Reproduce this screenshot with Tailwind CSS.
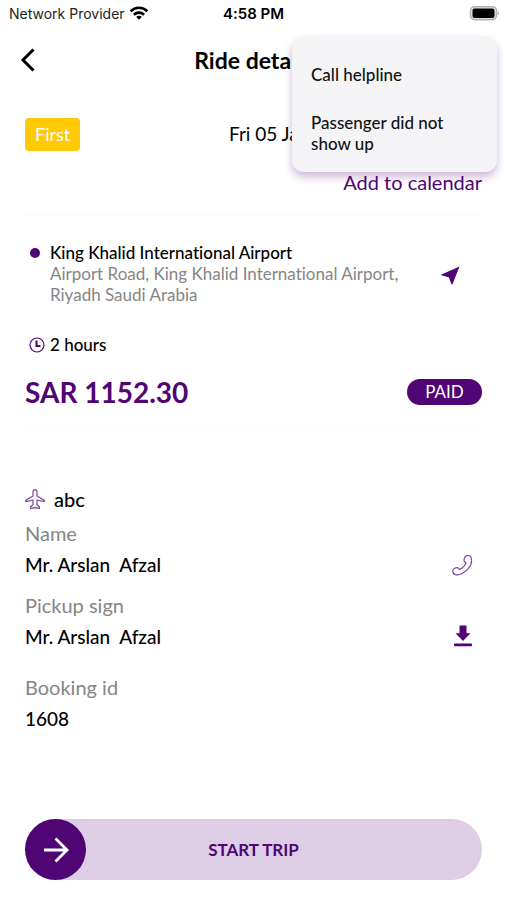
<!DOCTYPE html>
<html lang="en">
<head>
<meta charset="utf-8">
<meta name="viewport" content="width=device-width, initial-scale=1">
<title>Ride details</title>
<script src="https://cdn.jsdelivr.net/npm/@tailwindcss/browser@4"></script>
</head>
<body class="bg-white">
<div class="relative flex min-h-screen flex-col bg-white pb-5 font-['Lato','Open_Sans',sans-serif] text-black [font-variant-ligatures:none]">
  <div class="grid h-7 grid-cols-3 items-center px-2 font-['Inter',sans-serif] text-sm leading-7">
    <div class="flex items-center gap-1 pl-px whitespace-nowrap text-[#222]">
      <span>Network Provider</span>
      <svg class="h-4 w-5" viewBox="0 0 20 16" fill="none" stroke="#000" stroke-width="2.6" aria-hidden="true"><path d="M1.6 5.2a12 12 0 0 1 16.8 0M4.900 8.700a7.3 7.3 0 0 1 10.2 0"/><path d="M10 9.800c1.1 0 2.1.4 2.8 1.1L10 13.800l-2.8-2.9c.7-.7 1.7-1.1 2.8-1.1z" fill="#000" stroke="none"/></svg>
    </div>
    <span class="text-center text-[15px] font-semibold">4:58 PM</span>
    <svg class="h-4 w-8 justify-self-end" viewBox="0 0 32 16" aria-hidden="true"><rect x="3.500" y=".8" width="26" height="12.800" rx="4" fill="#e8e8e8" stroke="#b0b0b0" stroke-width="1.6"/><rect x="5.500" y="2.500" width="22" height="9.400" rx="2" fill="#000"/><path d="M30.800 5.200c1.600.6 1.600 3.400 0 4z" fill="#b0b0b0"/></svg>
  </div>

  <header class="grid h-16 grid-cols-[1fr_auto_1fr] items-center px-5">
    <button type="button" aria-label="Back" class="flex h-8 w-6 items-center"><svg class="h-6 w-4" viewBox="0 0 16 24" fill="none" stroke="#000" stroke-width="3"><path d="M13.500 1.500 3 12l10.500 10.500"/></svg></button>
    <h1 class="text-[23px] leading-8 font-bold">Ride details</h1>
  </header>

  <main class="flex grow flex-col px-[25px]">
    <div class="mt-6 flex h-9 items-center">
      <span class="flex h-[33px] items-center rounded-[4px] bg-[#ffca05] px-[10px] text-lg text-white">First</span>
      <span class="ml-auto w-[253px] text-[19px] whitespace-nowrap">Fri 05 Jan</span>
    </div>
    <a href="#" class="mt-4 self-end text-xl leading-7 text-[#4f0574]">Add to calendar</a>

    <hr class="mt-[18px] border-[#f9f9f9]">

    <section class="mt-[27px] flex items-center">
      <div class="flex grow gap-[10px] pl-[5px]">
        <span class="mt-[6px] size-[10px] shrink-0 rounded-full bg-[#4f0574]"></span>
        <div class="text-[17px] leading-[21px]">
          <h2 class="font-medium">King Khalid International Airport</h2>
          <p class="text-[#858585]">Airport Road, King Khalid International Airport,<br>Riyadh Saudi Arabia</p>
        </div>
      </div>
      <button type="button" aria-label="Navigate" class="mt-1 mr-[22px]"><svg class="size-[19px]" viewBox="0 0 19 19" fill="#4f0574"><path d="M18.500.5 0 8.800l1 .8 6.800 1.600 2.700 7h1z"/></svg></button>
    </section>

    <div class="mt-7 flex h-6 items-center gap-[5px] pl-1 text-[17px] font-medium">
      <svg class="size-4" viewBox="0 0 16 16" fill="none" stroke="#4f0574" aria-hidden="true"><circle cx="8" cy="8" r="7" stroke-width="1.200"/><path d="M7.500 3.500V9h4" stroke-width="2"/></svg>
      <span>2 hours</span>
    </div>

    <div class="mt-[15px] flex h-10 items-center justify-between text-[#4f0574]">
      <strong class="text-[28px] leading-10 font-bold">SAR 1152.30</strong>
      <span class="flex h-[26px] w-[75px] items-center justify-center rounded-full bg-[#4f0574] text-[17px] text-white">PAID</span>
    </div>

    <hr class="mt-[17px] border-[#f9f9f9]">
    <hr class="mt-9 border-[#fcfcfc]">

    <div class="mt-[18px] flex h-7 items-center gap-[9px] text-xl font-medium">
      <svg class="size-5" viewBox="0 0 20 20" fill="none" stroke="#7c47a0" stroke-width="1.200" stroke-linejoin="round" aria-hidden="true"><path d="M8 3.200C8 1.500 8.900.6 10 .6s2 .9 2 2.600V7l7.300 4.200v1.500L12 11v4.800l2.400 2v1.600L10 18.600l-4.400.8v-1.600l2.400-2V11L.7 12.700v-1.500L8 7z"/></svg>
      <span>abc</span>
    </div>

    <dl class="mt-1 text-[19px] leading-8">
      <div class="flex items-end justify-between">
        <div>
          <dt class="text-xl leading-8 text-[#858585]">Name</dt>
          <dd class="font-medium whitespace-pre">Mr. Arslan  Afzal</dd>
        </div>
        <button type="button" aria-label="Call passenger" class="mr-[9px] mb-[5px]"><svg class="size-[21px]" viewBox="0 0 21 21" fill="none" stroke="#7c47a0" stroke-width="1.200" stroke-linejoin="round"><path d="M14.300.9c1.400-.7 3.300-.4 4.400.7 1.500 3.500.8 8.300-2.700 12.300-3.700 4.400-9 6.800-12.600 5.700-1.500-.5-2.800-2.500-2.600-4.200.5-1.700 3-3.100 4.900-2.800l1.700 1.800c3.200-1.200 5.700-3.700 6.600-6.700L12.300 6.300c-.8-1.600.3-4.500 2-5.400z"/></svg></button>
      </div>
      <div class="mt-2 flex items-end justify-between">
        <div>
          <dt class="text-xl leading-8 text-[#858585]">Pickup sign</dt>
          <dd class="font-medium whitespace-pre">Mr. Arslan  Afzal</dd>
        </div>
        <button type="button" aria-label="Download pickup sign" class="mr-[10px] mb-[6px]"><svg class="h-[22px] w-[18px]" viewBox="0 0 18 22" fill="#4f0574"><path d="M5.500.5h7v7.800h4L9 16 1.500 8.300h4z"/><rect x="0" y="18.500" width="18" height="2.800" rx=".8"/></svg></button>
      </div>
      <div class="mt-[18px]">
        <dt class="text-xl leading-8 text-[#858585]">Booking id</dt>
        <dd class="font-medium">1608</dd>
      </div>
    </dl>

    <button type="button" class="relative mt-auto flex h-[61px] items-center justify-center rounded-full bg-[#decee5] text-[17px] font-bold text-[#4f0574]">
      <span class="absolute inset-y-0 left-0 flex w-[61px] items-center justify-center rounded-full bg-[#4f0574]"><svg class="size-[26px]" viewBox="0 0 26 26" fill="none" stroke="#fff" stroke-width="2.800" aria-hidden="true"><path d="M1 13h23M12.500 1.500 24 13 12.500 24.500"/></svg></span>
      <span>START TRIP</span>
    </button>
  </main>

  <div role="menu" class="absolute top-9 right-[10px] w-[205px] rounded-xl bg-[#f4f4f7] px-[19px] pt-7 pb-[18px] text-[17px] leading-[21px] font-medium text-[#111] shadow-[0_5px_9px_rgba(79,5,116,0.28)]">
    <button type="button" role="menuitem" class="block w-full text-left">Call helpline</button>
    <button type="button" role="menuitem" class="mt-[27px] block w-full text-left">Passenger did not<br>show up</button>
  </div>
</div>
</body>
</html>
